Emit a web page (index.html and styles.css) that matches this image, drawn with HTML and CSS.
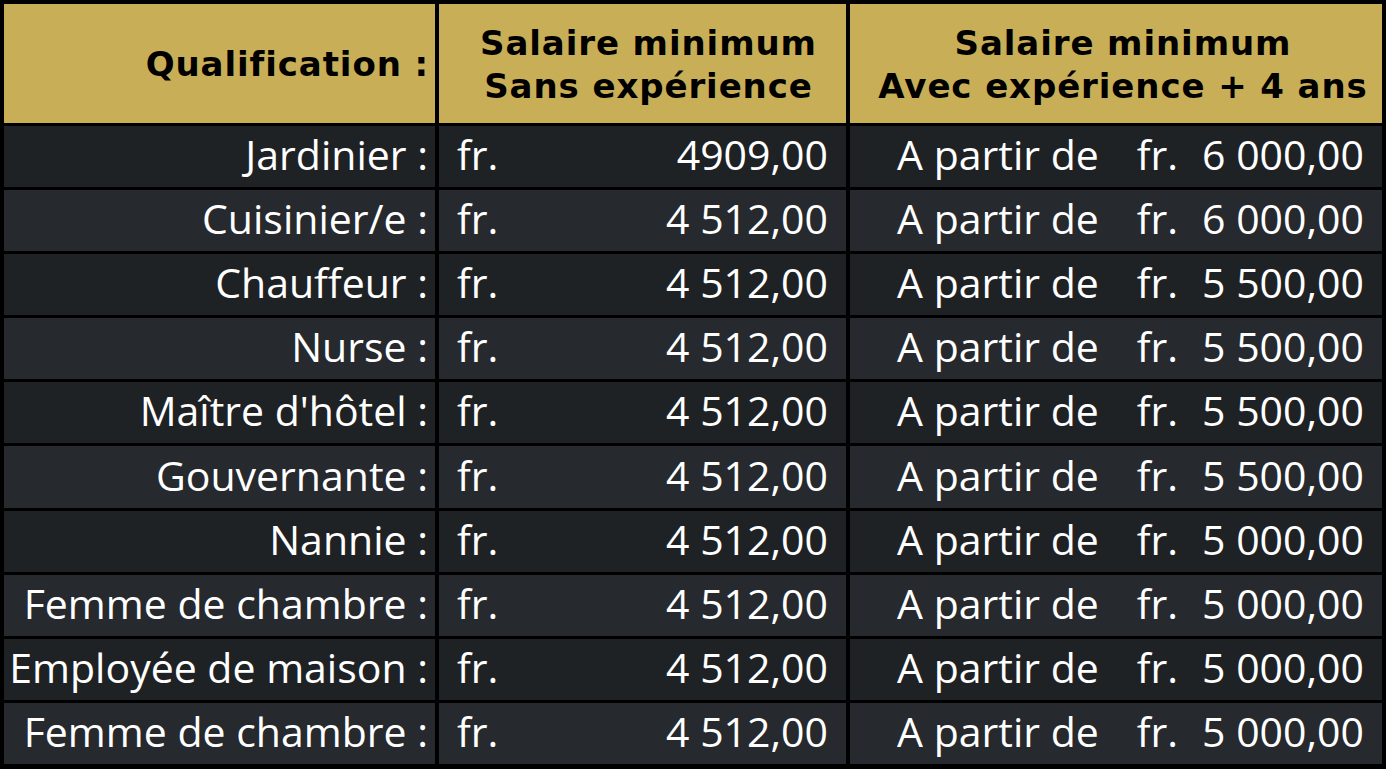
FILE: index.html
```html
<!DOCTYPE html>
<html lang="fr">
<head>
<meta charset="utf-8">
<title>Salaires minimum</title>
<link rel="stylesheet" href="styles.css">
</head>
<body>
<div class="table" role="table">
  <div class="hcell h-qual" role="columnheader">Qualification :</div>
  <div class="hcell h-base" role="columnheader">Salaire minimum<br>Sans expérience</div>
  <div class="hcell h-exp" role="columnheader">Salaire minimum<br>Avec expérience + 4 ans</div>

  <div class="cell qual odd">Jardinier :</div>
  <div class="cell base odd"><span>fr.</span><span>4909,00</span></div>
  <div class="cell exp odd"><span class="from">A partir de</span><span class="cur">fr.</span><span class="amt">6 000,00</span></div>

  <div class="cell qual even">Cuisinier/e :</div>
  <div class="cell base even"><span>fr.</span><span>4 512,00</span></div>
  <div class="cell exp even"><span class="from">A partir de</span><span class="cur">fr.</span><span class="amt">6 000,00</span></div>

  <div class="cell qual odd">Chauffeur :</div>
  <div class="cell base odd"><span>fr.</span><span>4 512,00</span></div>
  <div class="cell exp odd"><span class="from">A partir de</span><span class="cur">fr.</span><span class="amt">5 500,00</span></div>

  <div class="cell qual even">Nurse :</div>
  <div class="cell base even"><span>fr.</span><span>4 512,00</span></div>
  <div class="cell exp even"><span class="from">A partir de</span><span class="cur">fr.</span><span class="amt">5 500,00</span></div>

  <div class="cell qual odd">Maître d'hôtel :</div>
  <div class="cell base odd"><span>fr.</span><span>4 512,00</span></div>
  <div class="cell exp odd"><span class="from">A partir de</span><span class="cur">fr.</span><span class="amt">5 500,00</span></div>

  <div class="cell qual even">Gouvernante :</div>
  <div class="cell base even"><span>fr.</span><span>4 512,00</span></div>
  <div class="cell exp even"><span class="from">A partir de</span><span class="cur">fr.</span><span class="amt">5 500,00</span></div>

  <div class="cell qual odd">Nannie :</div>
  <div class="cell base odd"><span>fr.</span><span>4 512,00</span></div>
  <div class="cell exp odd"><span class="from">A partir de</span><span class="cur">fr.</span><span class="amt">5 000,00</span></div>

  <div class="cell qual even">Femme de chambre :</div>
  <div class="cell base even"><span>fr.</span><span>4 512,00</span></div>
  <div class="cell exp even"><span class="from">A partir de</span><span class="cur">fr.</span><span class="amt">5 000,00</span></div>

  <div class="cell qual odd">Employée de maison :</div>
  <div class="cell base odd"><span>fr.</span><span>4 512,00</span></div>
  <div class="cell exp odd"><span class="from">A partir de</span><span class="cur">fr.</span><span class="amt">5 000,00</span></div>

  <div class="cell qual even">Femme de chambre :</div>
  <div class="cell base even"><span>fr.</span><span>4 512,00</span></div>
  <div class="cell exp even"><span class="from">A partir de</span><span class="cur">fr.</span><span class="amt">5 000,00</span></div>
</div>
</body>
</html>
```
FILE: styles.css
```css
html, body {
  margin: 0;
  padding: 0;
  background: #000;
}

.table {
  box-sizing: border-box;
  width: 1386px;
  height: 769px;
  padding: 4px 4px 5px 4px;
  background: #000;
  display: grid;
  grid-template-columns: 431px 407px 532px;
  grid-template-rows: 119px repeat(10, 1fr);
  column-gap: 4px;
  row-gap: 3px;
}

.hcell {
  background: #c8ae56;
  color: #000;
  font-family: "DejaVu Sans", sans-serif;
  font-weight: bold;
  font-size: 34px;
  letter-spacing: 0.9px;
  line-height: 43px;
  display: flex;
  align-items: center;
  justify-content: center;
  text-align: center;
  padding-top: 2px;
}

.h-qual {
  justify-content: flex-end;
  padding-right: 6px;
}

.h-base {
  padding-left: 12px;
}

.h-exp {
  padding-left: 14px;
}

.cell {
  color: #fff;
  font-family: "Open Sans", sans-serif;
  font-size: 41px;
  display: flex;
  align-items: center;
  white-space: nowrap;
  padding-bottom: 5px;
}

.odd { background: #1f2225; }
.even { background: #26292d; }

.qual {
  justify-content: flex-end;
  padding-right: 7px;
}

.base {
  justify-content: space-between;
  padding-left: 18px;
  padding-right: 18px;
}

.exp {
  justify-content: flex-end;
  padding-right: 18px;
}

.exp .cur {
  margin-left: 38px;
}

.exp .amt {
  margin-left: 24px;
}
```
